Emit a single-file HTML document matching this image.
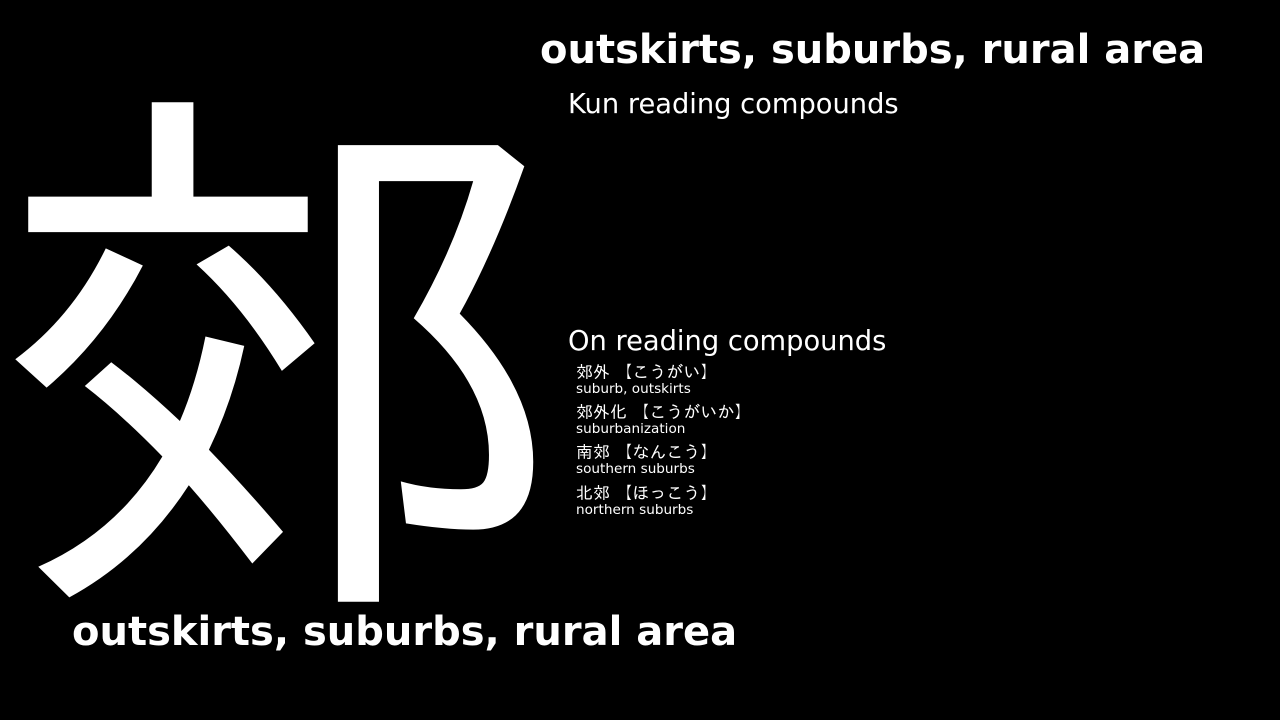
<!DOCTYPE html>
<html><head><meta charset="utf-8"><style>
body{margin:0;width:1280px;height:720px;background:#000;color:#fff;overflow:hidden;position:relative;font-family:"DejaVu Sans","Liberation Sans","IPAGothic",sans-serif}
.k{position:absolute;left:-14px;top:75px;font-family:"IPAGothic","Noto Sans CJK JP",sans-serif;font-size:555px;line-height:555px;transform:scaleX(1.06);transform-origin:0 0}
.t{position:absolute;font-weight:bold;font-size:40px;line-height:44px;white-space:nowrap}
.h{position:absolute;left:568px;font-size:27.3px;line-height:30px;white-space:nowrap}
.c{position:absolute;left:576px;white-space:nowrap}
.c .j{font-family:"DejaVu Sans","IPAGothic",sans-serif;font-size:17px;line-height:18px}
.c .e{font-size:13.6px;line-height:14px}
</style></head><body>
<div class="k">郊</div>
<div class="t" style="left:540px;top:28px">outskirts, suburbs, rural area</div>
<div class="h" style="top:90px">Kun reading compounds</div>
<div class="h" style="top:327px">On reading compounds</div>
<div class="c" style="top:364px"><div class="j">郊外 【こうがい】</div><div class="e">suburb, outskirts</div></div>
<div class="c" style="top:404px"><div class="j">郊外化 【こうがいか】</div><div class="e">suburbanization</div></div>
<div class="c" style="top:444px"><div class="j">南郊 【なんこう】</div><div class="e">southern suburbs</div></div>
<div class="c" style="top:485px"><div class="j">北郊 【ほっこう】</div><div class="e">northern suburbs</div></div>
<div class="t" style="left:72px;top:610px">outskirts, suburbs, rural area</div>
</body></html>
